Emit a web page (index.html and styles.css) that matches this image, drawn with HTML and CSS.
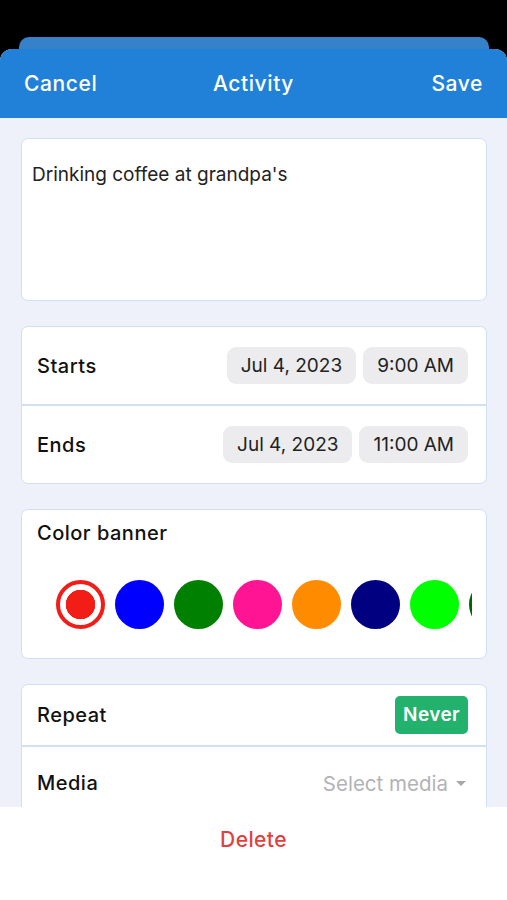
FILE: index.html
```html
<!DOCTYPE html>
<html lang="en">
    <head>
        <meta charset="UTF-8" />
        <meta name="viewport" content="width=device-width, initial-scale=1.0" />
        <title>Activity</title>
        <link rel="stylesheet" href="styles.css">
    </head>
    <body>
        <div class="backdrop">
            <div class="back-card"></div>
        </div>
        <div class="sheet">
            <div class="header">
                <span class="header-btn">Cancel</span>
                <span class="header-title">Activity</span>
                <span class="header-btn save">Save</span>
            </div>
            <div class="content">
                <div class="card note">Drinking coffee at grandpa's</div>

                <div class="card">
                    <div class="row date-row">
                        <span class="label">Starts</span>
                        <div class="pills">
                            <span class="pill">Jul 4, 2023</span>
                            <span class="pill">9:00 AM</span>
                        </div>
                    </div>
                    <div class="row date-row">
                        <span class="label">Ends</span>
                        <div class="pills">
                            <span class="pill">Jul 4, 2023</span>
                            <span class="pill">11:00 AM</span>
                        </div>
                    </div>
                </div>

                <div class="card colors">
                    <div class="label">Color banner</div>
                    <div class="swatches">
                        <span class="swatch selected" style="--c: #f21d16"></span>
                        <span class="swatch" style="--c: #0000ff"></span>
                        <span class="swatch" style="--c: #008000"></span>
                        <span class="swatch" style="--c: #ff1493"></span>
                        <span class="swatch" style="--c: #ff8c00"></span>
                        <span class="swatch" style="--c: #000080"></span>
                        <span class="swatch" style="--c: #00ff00"></span>
                        <span class="swatch" style="--c: #006400"></span>
                    </div>
                </div>

                <div class="card">
                    <div class="row repeat-row">
                        <span class="label">Repeat</span>
                        <span class="badge">Never</span>
                    </div>
                    <div class="row media-row">
                        <span class="label">Media</span>
                        <span class="select">Select media <span class="caret"></span></span>
                    </div>
                </div>
            </div>
            <div class="footer">
                <span class="delete">Delete</span>
            </div>
        </div>
    </body>
</html>
```

FILE: styles.css
```css
body {
    margin: 0;
    background: #000;
    font-family: Inter, "Noto Sans", sans-serif;
    color: #1c1c1e;
}
.backdrop {
    height: 49px;
    display: flex;
    align-items: flex-end;
}
.back-card {
    flex: 1;
    height: 12px;
    margin: 0 18px 0 19px;
    background: #3582cb;
    border-radius: 10px 10px 0 0;
}
.sheet {
    height: 851px;
    display: flex;
    flex-direction: column;
    background: #eef0fa;
    border-radius: 12px 12px 0 0;
    overflow: hidden;
}
.header {
    height: 69px;
    flex-shrink: 0;
    display: grid;
    grid-template-columns: 1fr auto 1fr;
    align-items: center;
    padding: 0 24px 0 24px;
    background: #2181d8;
    color: #fff;
    font-size: 21px;
    font-weight: 500;
    letter-spacing: 0.6px;
}
.header-btn.save {
    text-align: right;
}
.content {
    flex: 1;
    overflow: hidden;
    padding: 20px 20px 0 21px;
}
.card {
    background: #fff;
    border: 1px solid #cfe1f3;
    border-radius: 7px;
    margin-bottom: 25px;
}
.note {
    height: 163px;
    box-sizing: border-box;
    padding: 24px 10px;
    font-size: 19px;
    line-height: 24px;
    color: #222;
}
.row {
    display: flex;
    align-items: center;
    justify-content: space-between;
    padding: 0 18px 0 15px;
}
.row + .row {
    border-top: 2px solid #cfe1f3;
}
.date-row {
    height: 77px;
}
.label {
    font-size: 20px;
    font-weight: 500;
    letter-spacing: 0.5px;
    color: #111;
}
.pills {
    display: flex;
    gap: 7px;
}
.pill {
    background: #ececef;
    border-radius: 9px;
    padding: 0 14px;
    height: 37px;
    line-height: 37px;
    font-size: 19px;
    color: #222;
}
.colors {
    height: 150px;
    padding: 11px 0 0 15px;
    box-sizing: border-box;
}
.swatches {
    display: flex;
    gap: 10px;
    width: 416px;
    margin: 35px 0 0 19px;
    overflow: hidden;
}
.swatch {
    flex-shrink: 0;
    width: 49px;
    height: 49px;
    border-radius: 50%;
    background: var(--c);
}
.swatch.selected {
    box-sizing: border-box;
    border: 4px solid var(--c);
    background: radial-gradient(circle, var(--c) 0 14.5px, #fff 15px);
}
.repeat-row {
    height: 60px;
}
.media-row {
    height: 72px;
}
.badge {
    background: #22b26e;
    color: #fff;
    font-size: 19px;
    font-weight: 600;
    letter-spacing: 0.4px;
    padding: 0 8px;
    height: 38px;
    line-height: 38px;
    border-radius: 5px;
}
.select {
    font-size: 20.5px;
    color: #b3b3b6;
    display: flex;
    align-items: center;
    gap: 8px;
    margin-right: 2px;
}
.caret {
    width: 0;
    height: 0;
    border-left: 5px solid transparent;
    border-right: 5px solid transparent;
    border-top: 5px solid #a8a8ab;
}
.footer {
    height: 93px;
    flex-shrink: 0;
    background: #fff;
    display: flex;
    justify-content: center;
    padding-top: 20px;
    box-sizing: border-box;
}
.delete {
    color: #e2403f;
    font-size: 21px;
    font-weight: 500;
    letter-spacing: 0.4px;
}
```
